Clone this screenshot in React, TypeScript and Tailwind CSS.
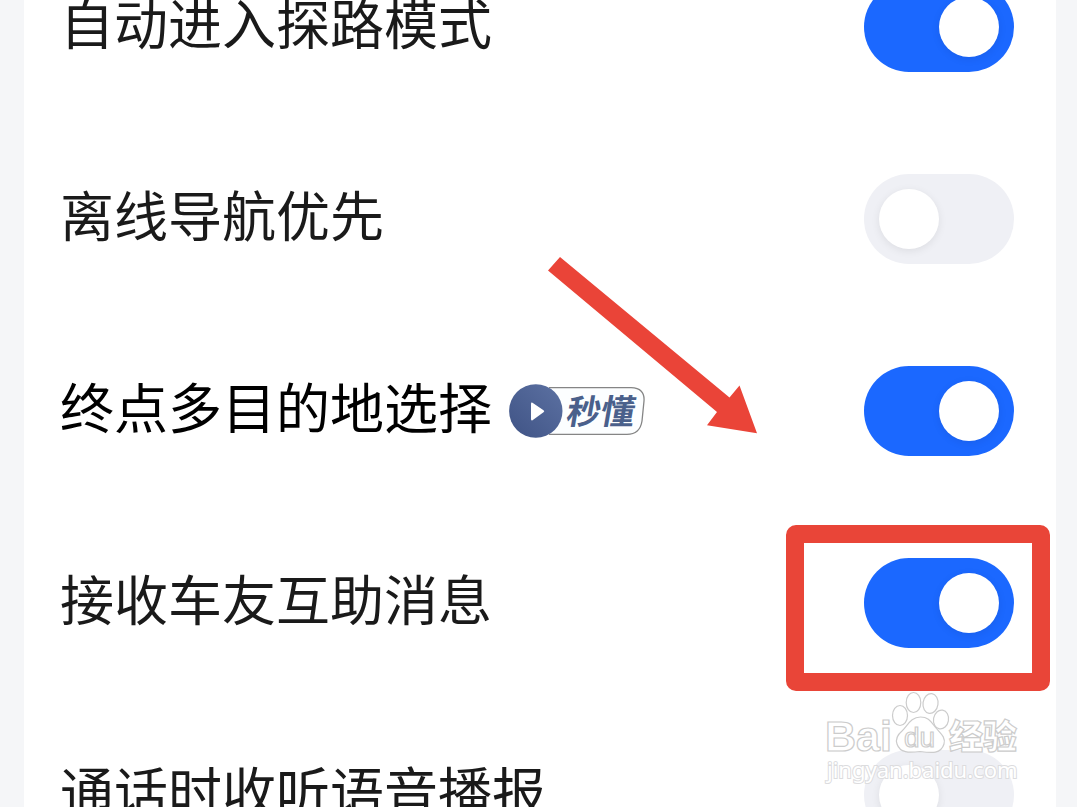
import { useState } from "react";
import type { ReactNode } from "react";

type Setting = {
  id: string;
  label: string;
  on: boolean;
  badge?: boolean;
  arrow?: boolean;
  framed?: boolean;
  watermark?: boolean;
};

const settings: Setting[] = [
  { id: "explore", label: "自动进入探路模式", on: true },
  { id: "offline", label: "离线导航优先", on: false },
  { id: "multi", label: "终点多目的地选择", on: true, badge: true, arrow: true },
  { id: "help", label: "接收车友互助消息", on: true, framed: true },
  { id: "call", label: "通话时收听语音播报", on: false, watermark: true },
];

function VideoBadge() {
  return (
    <svg width="136" height="54" viewBox="0 0 136 54" role="img" aria-label="秒懂" className="shrink-0">
      <defs>
        <linearGradient id="disc" x1="0" y1="1" x2="1" y2="0">
          <stop offset="0" stopColor="#3f5385" />
          <stop offset="1" stopColor="#5c71a2" />
        </linearGradient>
      </defs>
      <path
        d="M40 3.7H122Q136 4 135 17L133 37Q131 50.3 118 50.3H40"
        fill="#fcfeff"
        stroke="#858585"
        strokeWidth="1.3"
      />
      <circle cx="26.8" cy="27" r="26.7" fill="url(#disc)" />
      <path d="M23.5 18.8L34.5 26.2Q36 27.2 34.5 28.3L23.5 36.3Q22 37 22 35V20Q22 18 23.5 18.8Z" fill="#fff" />
      <text
        x="56"
        y="40"
        transform="translate(7 0) skewX(-10)"
        className="fill-[#4a608b] font-['Noto_Sans_CJK_SC',sans-serif] text-[34px] font-bold"
      >
        秒懂
      </text>
    </svg>
  );
}

function Arrow() {
  return (
    <svg
      width="212"
      height="180"
      viewBox="0 0 212 180"
      aria-hidden="true"
      className="pointer-events-none absolute -top-15 right-[255px]"
    >
      <path d="M13 2L182.500 142.500L192.500 130.500L210 178.300L160 170.300L170 157L1 15.500Z" fill="#ea4438" />
    </svg>
  );
}

function Watermark() {
  return (
    <svg
      width="200"
      height="98"
      viewBox="822 688 200 98"
      role="img"
      aria-label="Baidu 经验 jingyan.baidu.com"
      className="pointer-events-none absolute -top-[11px] -right-2"
    >
      <g fill="#fff" stroke="#cccccc" strokeWidth="1.2">
        <text x="825" y="751" className="font-['Liberation_Sans',sans-serif] text-[43px] font-bold">
          Bai
        </text>
        <ellipse cx="900" cy="715.500" rx="7.500" ry="10" />
        <ellipse cx="913.500" cy="702.500" rx="7.300" ry="10" />
        <ellipse cx="930.500" cy="703.500" rx="7.500" ry="10" transform="rotate(8 930.5 703.500)" />
        <ellipse cx="941" cy="719.500" rx="7.500" ry="9.500" transform="rotate(10 941 719.500)" />
        <path d="M920.500 717C911 717 908 725 902 731C896 736 896 741 897 744C900 753 909 753 920 751.500C932 753 941 754 944 744C946 737 940 733 936 728C931 722 929 717 920.500 717Z" />
        <text x="904" y="747" className="font-['Liberation_Sans',sans-serif] text-[28px]">
          du
        </text>
        <text x="949" y="749" className="font-['Noto_Sans_CJK_SC',sans-serif] text-[34px] font-black">
          经验
        </text>
      </g>
      <text
        x="827"
        y="778"
        fill="#fff"
        stroke="#dcdcde"
        strokeWidth="2"
        paintOrder="stroke"
        className="font-['Noto_Sans',sans-serif] text-[22px]"
      >
        jingyan.baidu.com
      </text>
    </svg>
  );
}

function Toggle({ id, initial, children }: { id: string; initial: boolean; children?: ReactNode }) {
  const [on, setOn] = useState(initial);
  return (
    <div className="relative flex shrink-0">
      <input
        id={id}
        type="checkbox"
        role="switch"
        checked={on}
        onChange={(e) => setOn(e.target.checked)}
        className="flex h-[90px] w-[150px] cursor-pointer appearance-none items-center rounded-full bg-[#eff0f5] p-[15px] before:size-[60px] before:rounded-full before:bg-white before:shadow-[0_2px_8px_rgba(0,0,0,0.08)] before:content-[''] checked:justify-end checked:bg-[#1b68ff]"
      />
      {children}
    </div>
  );
}

function Row({ item }: { item: Setting }) {
  return (
    <li className="relative flex h-48 items-center justify-between">
      <div className="flex items-center gap-[17px]">
        <label
          htmlFor={item.id}
          className={
            item.badge
              ? "pb-2.5 text-[54px] leading-[80px] whitespace-nowrap text-black"
              : "pb-2.5 text-[54px] leading-[80px] whitespace-nowrap text-[#1a1a1a]"
          }
        >
          {item.label}
        </label>
        {item.badge && <VideoBadge />}
      </div>
      <Toggle id={item.id} initial={item.on}>
        {item.framed && (
          <div className="pointer-events-none absolute -top-[33px] -right-9 -bottom-[43px] -left-[78px] rounded-[10px] border-[18px] border-[#e94538]" />
        )}
      </Toggle>
      {item.arrow && <Arrow />}
      {item.watermark && <Watermark />}
    </li>
  );
}

export default function App() {
  return (
    <main className="h-screen overflow-hidden bg-[#f5f6f8] pr-[21px] pl-6 font-['Noto_Sans_CJK_SC',sans-serif]">
      <ul className="-mt-[69px] bg-white pr-[42px] pl-9">
        {settings.map((item) => (
          <Row key={item.id} item={item} />
        ))}
      </ul>
    </main>
  );
}
